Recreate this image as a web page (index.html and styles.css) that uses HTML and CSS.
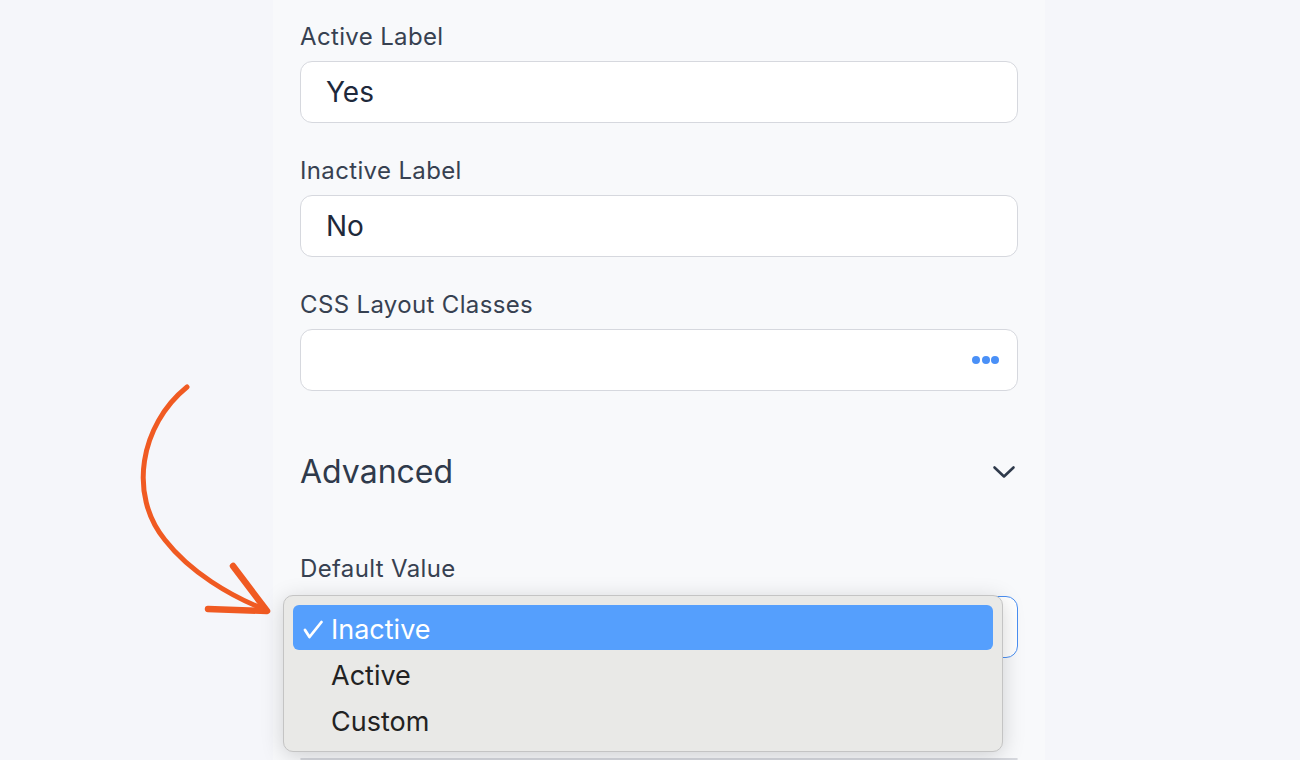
FILE: index.html
```html
<!DOCTYPE html>
<html>
<head>
<meta charset="utf-8">
<link rel="stylesheet" href="styles.css">
</head>
<body>
<div class="page">
  <div class="panel">
    <div class="field">
      <div class="label">Active Label</div>
      <div class="input"><span class="value">Yes</span></div>
    </div>
    <div class="field">
      <div class="label">Inactive Label</div>
      <div class="input"><span class="value">No</span></div>
    </div>
    <div class="field">
      <div class="label">CSS Layout Classes</div>
      <div class="input input-dots">
        <span class="dots"><i></i><i></i><i></i></span>
      </div>
    </div>
    <div class="section-head">
      <span class="section-title">Advanced</span>
      <svg class="chevron" width="24" height="16" viewBox="0 0 24 16"><path d="M2.5 3.5 L12 12.5 L21.5 3.5" fill="none" stroke="#2f3a4b" stroke-width="2.6" stroke-linecap="round" stroke-linejoin="round"/></svg>
    </div>
    <div class="field field-default">
      <div class="label">Default Value</div>
      <div class="select-wrap">
        <div class="input input-focus"></div>
        <div class="menu">
          <div class="opt opt-sel"><svg class="check" width="28" height="20" viewBox="0 0 28 20"><path d="M2 11 L6.5 18 L18.5 3" fill="none" stroke="#ffffff" stroke-width="2.8" stroke-linecap="round" stroke-linejoin="round"/></svg>Inactive</div>
          <div class="opt">Active</div>
          <div class="opt">Custom</div>
        </div>
      </div>
    </div>
    <div class="input input-next"></div>
  </div>
  <svg class="arrow" width="300" height="300" viewBox="0 0 300 300">
    <path d="M187 387 C 140 425, 128 495, 165 540 C 190 572, 230 596, 266 610" fill="none" stroke="#f05a22" stroke-width="5" stroke-linecap="round" transform="translate(-100 -350)"/>
    <path d="M233 566 L 267 611 L 208 609" fill="none" stroke="#f05a22" stroke-width="6.5" stroke-linecap="round" stroke-linejoin="round" transform="translate(-100 -350)"/>
  </svg>
</div>
</body>
</html>
```

FILE: styles.css
```css
* { box-sizing: border-box; }
html, body { margin: 0; padding: 0; }
body {
  background: #f5f6fa;
  font-family: Inter, "Noto Sans", sans-serif;
  width: 1300px;
  height: 760px;
  overflow: hidden;
}
.page {
  position: relative;
  width: 1300px;
  height: 760px;
  display: flex;
}
.panel {
  margin-left: 273px;
  width: 772px;
  height: 760px;
  background: #f8f9fb;
  padding: 23px 27px 0 27px;
  display: flex;
  flex-direction: column;
}
.field { display: flex; flex-direction: column; margin-bottom: 34px; }
.label {
  font-size: 24px;
  line-height: 28px;
  letter-spacing: 0.35px;
  color: #374151;
  margin-bottom: 10px;
}
.input {
  height: 62px;
  background: #ffffff;
  border: 1px solid #d6d8de;
  border-radius: 12px;
  display: flex;
  align-items: center;
  padding: 0 25px;
}
.value { font-size: 28px; color: #1e293b; }
.input-dots { justify-content: flex-end; padding-right: 18px; }
.dots { display: flex; gap: 1.5px; }
.dots i { width: 8px; height: 8px; border-radius: 50%; background: #4a90f7; display: block; }
.section-head {
  display: flex;
  align-items: center;
  justify-content: space-between;
  height: 40px;
  margin-top: 27px;
  padding-right: 2px;
}
.section-title { font-size: 32px; color: #2f3a4b; }
.field-default { margin-top: 64px; margin-bottom: 0; }
.field-default .label { margin-bottom: 13px; }
.select-wrap { position: relative; }
.input-focus { border-color: #4a8ff2; }
.menu {
  position: absolute;
  left: -17px;
  top: -1px;
  width: 720px;
  height: 157px;
  background: #e9e9e7;
  border: 1px solid #c4c4c4;
  border-radius: 10px;
  box-shadow: 0 4px 22px rgba(0,0,0,0.17);
  padding: 9px 9px;
  z-index: 2;
}
.opt {
  height: 46px;
  display: flex;
  align-items: center;
  padding-left: 38px;
  padding-top: 3px;
  font-size: 27px;
  color: #222222;
  border-radius: 6px;
}
.opt-sel {
  background: #559ffd;
  color: #ffffff;
  padding-left: 10px;
  height: 45px;
  margin-bottom: 1px;
}
.check { display: block; flex: none; margin-top: -1px; }
.input-next { margin-top: 100px; height: 62px; }
.arrow {
  position: absolute;
  left: 100px;
  top: 350px;
  overflow: visible;
}
```
